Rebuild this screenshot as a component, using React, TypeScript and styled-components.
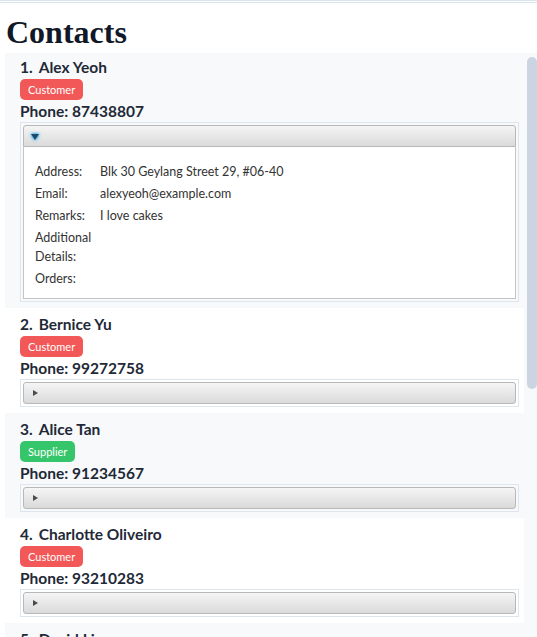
import React from "react";
import styled, { createGlobalStyle } from "styled-components";

const GlobalStyle = createGlobalStyle`
  html, body { margin: 0; padding: 0; background: #ffffff; }
  body { font-family: Lato, "Noto Sans", sans-serif; }
  #root { width: 537px; height: 637px; overflow: hidden; }
`;

const Page = styled.div`
  display: flex;
  flex-direction: column;
  height: 637px;
`;

const TopRule = styled.div`
  flex-shrink: 0;
  height: 1px;
  border-top: 1px solid #dbe4ec;
  border-bottom: 1px solid #dbe4ec;
`;

const Title = styled.h1`
  margin: 11px 0 3px 6px;
  font-family: "Liberation Serif", "Times New Roman", serif;
  font-weight: 700;
  font-size: 32px;
  line-height: 36px;
  color: #111827;
`;

const ListView = styled.div`
  flex: 1;
  min-height: 0;
  display: flex;
  margin-left: 5px;
  background: #f7f9fb;
  overflow: hidden;
`;

const Cells = styled.div`
  width: 519px;
  flex-shrink: 0;
  display: flex;
  flex-direction: column;
  margin-top: -2px;
`;

const ScrollTrack = styled.div`
  flex: 1;
  padding: 4px 0 0 3px;
`;

const ScrollThumb = styled.div`
  width: 10px;
  height: 332px;
  border-radius: 5px;
  background: #cbd5e1;
`;

const Cell = styled.div<{ $alt: boolean }>`
  display: flex;
  flex-direction: column;
  align-items: stretch;
  padding: 7px 5px 6px 15px;
  background: ${(p) => (p.$alt ? "#ffffff" : "transparent")};
  color: #1f2937;
`;

const NameRow = styled.div`
  display: flex;
  gap: 6px;
  font-weight: 700;
  font-size: 15.5px;
  line-height: 19px;
`;

const Badge = styled.span<{ $kind: "customer" | "supplier" }>`
  align-self: flex-start;
  margin-top: 2px;
  height: 21px;
  padding: 0 8px;
  border-radius: 5px;
  font-size: 11px;
  line-height: 21px;
  color: #ffffff;
  background: ${(p) => (p.$kind === "customer" ? "#f25858" : "#35c66b")};
`;

const Phone = styled.div`
  margin-top: 2px;
  font-weight: 700;
  font-size: 15.5px;
  line-height: 19px;
`;

const Pane = styled.div`
  margin-top: 1px;
  padding: 2px;
  border: 1px solid #dde5ee;
`;

const PaneHeader = styled.div<{ $open: boolean }>`
  height: 20px;
  display: flex;
  align-items: center;
  padding-left: ${(p) => (p.$open ? "7px" : "9px")};
  border: 1px solid #b8b8b8;
  border-radius: ${(p) => (p.$open ? "3px 3px 0 0" : "3px")};
  background: linear-gradient(#f5f5f5, #dadada);
`;

const ArrowRight = styled.span`
  width: 0;
  height: 0;
  border-left: 5px solid #4b4b4b;
  border-top: 3.5px solid transparent;
  border-bottom: 3.5px solid transparent;
`;

const ArrowDown = styled.span`
  width: 0;
  height: 0;
  margin-top: 1px;
  border-top: 6px solid #1d4a66;
  border-left: 4.5px solid transparent;
  border-right: 4.5px solid transparent;
  filter: drop-shadow(0 0 1.5px #2aa4e6) drop-shadow(0 0 1px #54bdf0);
`;

const PaneContent = styled.div`
  display: grid;
  grid-template-columns: 60px 1fr;
  column-gap: 5px;
  row-gap: 3px;
  padding: 15px 11px 10px;
  border: 1px solid #c4c4c4;
  border-top: none;
  background: #ffffff;
  font-size: 12.5px;
  line-height: 19px;
  color: #333333;
`;

const Label = styled.span``;
const Value = styled.span``;

type Contact = {
  name: string;
  kind: "customer" | "supplier";
  phone: string;
  open?: boolean;
  address?: string;
  email?: string;
  remarks?: string;
};

const contacts: Contact[] = [
  {
    name: "Alex Yeoh",
    kind: "customer",
    phone: "87438807",
    open: true,
    address: "Blk 30 Geylang Street 29, #06-40",
    email: "alexyeoh@example.com",
    remarks: "I love cakes",
  },
  { name: "Bernice Yu", kind: "customer", phone: "99272758" },
  { name: "Alice Tan", kind: "supplier", phone: "91234567" },
  { name: "Charlotte Oliveiro", kind: "customer", phone: "93210283" },
  { name: "David Li", kind: "customer", phone: "91031282" },
];

export default function App() {
  return (
    <>
      <GlobalStyle />
      <Page>
        <TopRule />
        <Title>Contacts</Title>
        <ListView>
          <Cells>
            {contacts.map((c, i) => (
              <Cell key={c.name} $alt={i % 2 === 1}>
                <NameRow>
                  <span>{i + 1}.</span>
                  <span>{c.name}</span>
                </NameRow>
                <Badge $kind={c.kind}>{c.kind === "customer" ? "Customer" : "Supplier"}</Badge>
                <Phone>Phone: {c.phone}</Phone>
                <Pane>
                  <PaneHeader $open={!!c.open}>{c.open ? <ArrowDown /> : <ArrowRight />}</PaneHeader>
                  {c.open && (
                    <PaneContent>
                      <Label>Address:</Label>
                      <Value>{c.address}</Value>
                      <Label>Email:</Label>
                      <Value>{c.email}</Value>
                      <Label>Remarks:</Label>
                      <Value>{c.remarks}</Value>
                      <Label>Additional Details:</Label>
                      <Value></Value>
                      <Label>Orders:</Label>
                      <Value></Value>
                    </PaneContent>
                  )}
                </Pane>
              </Cell>
            ))}
          </Cells>
          <ScrollTrack>
            <ScrollThumb />
          </ScrollTrack>
        </ListView>
      </Page>
    </>
  );
}
